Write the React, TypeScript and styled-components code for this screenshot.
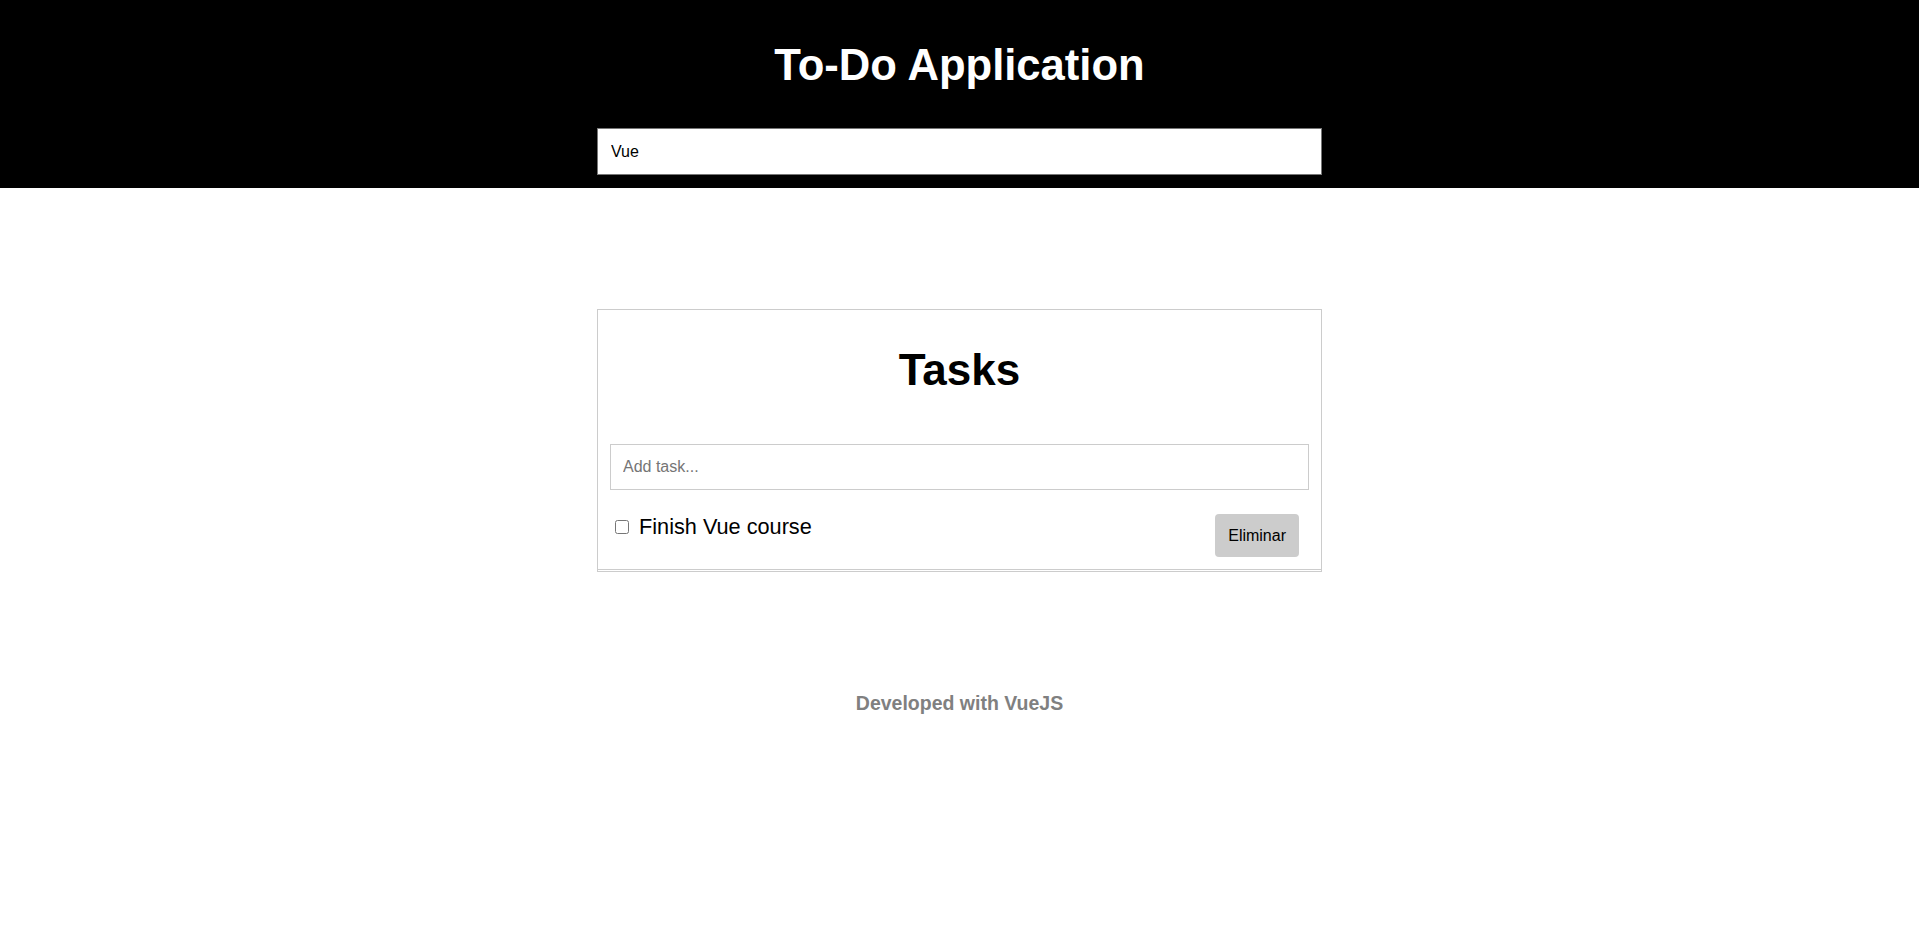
import React from "react";
import { styled, createGlobalStyle } from "styled-components";

interface Task {
	title: string;
	done: boolean;
}

export default function App() {
	const [search, setSearch] = React.useState("Vue");
	const [newTask, setNewTask] = React.useState("");
	const [tasks, setTasks] = React.useState<Array<Task>>([
		{ title: "Finish Vue course", done: false },
	]);

	const toggleTask = (index: number) => {
		setTasks(tasks.map((t, i) => (i === index ? { ...t, done: !t.done } : t)));
	};

	const removeTask = (index: number) => {
		setTasks(tasks.filter((_, i) => i !== index));
	};

	const handleKeyUp = (e: React.KeyboardEvent<HTMLInputElement>) => {
		if (e.key === "Enter" && newTask.trim()) {
			setTasks([...tasks, { title: newTask.trim(), done: false }]);
			setNewTask("");
		}
	};

	return (
		<>
			<GlobalStyle />
			<Header>
				<Title>To-Do Application</Title>
				<SearchInput
					type="text"
					value={search}
					onChange={(e) => setSearch(e.target.value)}
				/>
			</Header>
			<Main>
				<Card>
					<CardTitle>Tasks</CardTitle>
					<TaskInput
						type="text"
						placeholder="Add task..."
						value={newTask}
						onChange={(e) => setNewTask(e.target.value)}
						onKeyUp={handleKeyUp}
					/>
					<TaskList>
						{tasks.map((task, index) => (
							<TaskItem key={index}>
								<TaskLabel $done={task.done}>
									<Checkbox
										type="checkbox"
										checked={task.done}
										onChange={() => toggleTask(index)}
									/>
									{task.title}
								</TaskLabel>
								<DeleteButton onClick={() => removeTask(index)}>
									Eliminar
								</DeleteButton>
							</TaskItem>
						))}
					</TaskList>
				</Card>
			</Main>
			<Footer>Developed with VueJS</Footer>
		</>
	);
}

const GlobalStyle = createGlobalStyle`
	* {
		box-sizing: border-box;
	}

	body {
		margin: 0;
		font-family: "Liberation Sans", Arial, sans-serif;
		background: #fff;
		color: #000;
	}
`;

const Header = styled.header`
	background: #000;
	padding: 40px 0 13px;
	display: flex;
	flex-direction: column;
	align-items: center;
`;

const Title = styled.h1`
	margin: 0 0 38px;
	font-size: 43.6px;
	line-height: 50px;
	font-weight: 700;
	color: #fff;
`;

const SearchInput = styled.input`
	width: 725px;
	height: 47px;
	padding: 0 13px;
	border: 1px solid #767676;
	background: #fff;
	font-family: "Liberation Sans", Arial, sans-serif;
	font-size: 16px;
	color: #000;
	outline: none;
`;

const Main = styled.main`
	display: flex;
	justify-content: center;
	padding-top: 121px;
`;

const Card = styled.section`
	width: 725px;
	border: 1px solid #ccc;
	padding-bottom: 1px;
	display: flex;
	flex-direction: column;
`;

const CardTitle = styled.h2`
	margin: 36px 0 50px;
	font-size: 44px;
	line-height: 48px;
	font-weight: 700;
	text-align: center;
`;

const TaskInput = styled.input`
	margin: 0 12px;
	height: 46px;
	padding: 0 12px;
	border: 1px solid #ccc;
	font-family: "Liberation Sans", Arial, sans-serif;
	font-size: 16px;
	color: #000;
	outline: none;

	&::placeholder {
		color: #757575;
	}
`;

const TaskList = styled.ul`
	list-style: none;
	margin: 12px 0 0;
	padding: 0;
`;

const TaskItem = styled.li`
	display: flex;
	justify-content: space-between;
	align-items: flex-start;
	padding: 12px 22px 12px 12px;
	border-bottom: 1px solid #ccc;
`;

const TaskLabel = styled.label<{ $done: boolean }>`
	display: flex;
	align-items: center;
	font-size: 21.7px;
	line-height: 25px;
	text-decoration: ${(props) => (props.$done ? "line-through" : "none")};
`;

const Checkbox = styled.input`
	width: 14px;
	height: 14px;
	margin: 0 10px 0 5px;
`;

const DeleteButton = styled.button`
	height: 43px;
	padding: 0 13px;
	border: none;
	border-radius: 4px;
	background: #ccc;
	font-family: "Liberation Sans", Arial, sans-serif;
	font-size: 16px;
	color: #000;
	cursor: pointer;
`;

const Footer = styled.footer`
	margin-top: 120px;
	text-align: center;
	font-size: 19.5px;
	line-height: 22px;
	font-weight: 700;
	color: #808080;
`;
